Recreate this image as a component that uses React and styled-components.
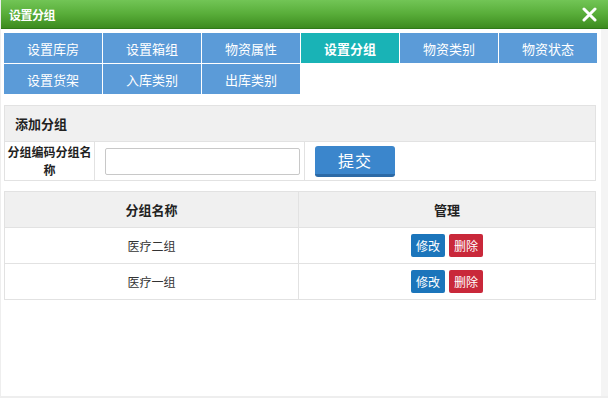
import React from "react";
import styled, { createGlobalStyle } from "styled-components";

const Global = createGlobalStyle`
	html, body {
		margin: 0;
		padding: 0;
		background: #fff;
	}
	body {
		font-family: "Noto Sans CJK SC", "Noto Sans", sans-serif;
		font-size: 12px;
		color: #333;
	}
`;

const Dialog = styled.div`
	width: 608px;
	height: 398px;
	box-sizing: border-box;
	display: flex;
	flex-direction: column;
	background: #fff;
	border-left: 1px solid #eee;
	border-bottom: 2px solid #eee;
	overflow: hidden;
`;

const TitleBar = styled.header`
	height: 28px;
	flex-shrink: 0;
	display: flex;
	align-items: center;
	justify-content: space-between;
	padding: 0 10px 0 8px;
	background: linear-gradient(to bottom, #72c556 0%, #58ad39 50%, #3d8b1f 100%);
	border-bottom: 1px solid #2f7a18;
`;

const Title = styled.h1`
	margin: 0;
	font-size: 12px;
	font-weight: bold;
	color: #fff;
	letter-spacing: -0.5px;
`;

const Close = styled.button`
	width: 18px;
	height: 18px;
	padding: 0;
	border: 0;
	background: none;
	display: flex;
	align-items: center;
	justify-content: center;
`;

const Body = styled.main`
	flex: 1;
	display: flex;
	flex-direction: column;
	padding: 4px 10px 0 3px;
	border-right: 7px solid #f4f4f4;
`;

const Tabs = styled.nav`
	display: grid;
	grid-template-columns: repeat(6, 98px);
	gap: 1px;
	margin-bottom: 11px;
`;

const Tab = styled.a`
	height: 30px;
	display: flex;
	align-items: center;
	justify-content: center;
	font-size: 13px;
	color: #fff;
	font-weight: ${p => (p.$active ? "bold" : "normal")};
	background: ${p => (p.$active ? "#19b3b6" : "#5b9bd8")};
	cursor: pointer;
`;

const Table = styled.table`
	width: 592px;
	border-collapse: collapse;
	margin-bottom: 10px;

	th, td {
		border: 1px solid #e2e2e2;
	}
`;

const HeadCell = styled.th`
	height: 35px;
	padding: 0 ${p => (p.$left ? "10px" : "0")};
	background: #f0f0f0;
	font-size: 13px;
	font-weight: bold;
	color: #222;
	text-align: ${p => (p.$left ? "left" : "center")};
`;

const Label = styled.td`
	width: 90px;
	height: 39px;
	padding: 0 2px;
	font-weight: bold;
	font-size: 12px;
	line-height: 18px;
	text-align: center;
	color: #222;
	box-sizing: border-box;
`;

const Cell = styled.td`
	height: 35px;
	padding: ${p => p.$pad || "0"};
	text-align: ${p => p.$align || "center"};
	font-size: 12px;
	color: #333;
`;

const Input = styled.input`
	width: 195px;
	height: 27px;
	box-sizing: border-box;
	border: 1px solid #c8c8c8;
	border-radius: 2px;
	outline: none;
	vertical-align: middle;
`;

const Submit = styled.button`
	width: 80px;
	height: 31px;
	border: 0;
	border-bottom: 3px solid #2c6aa6;
	border-radius: 3px;
	background: #3b86cc;
	color: #fff;
	font-family: inherit;
	font-size: 16px;
	letter-spacing: 1px;
	vertical-align: middle;
`;

const Action = styled.button`
	height: 23px;
	padding: 0 5px;
	margin: 0 2px;
	border: 0;
	border-radius: 2px;
	background: ${p => (p.$danger ? "#c9283a" : "#1b75bb")};
	color: #fff;
	font-family: inherit;
	font-size: 12px;
	vertical-align: middle;
`;

const tabs = ["设置库房", "设置箱组", "物资属性", "设置分组", "物资类别", "物资状态", "设置货架", "入库类别", "出库类别"];
const groups = ["医疗二组", "医疗一组"];

export default function App() {
	return (
		<>
			<Global />
			<Dialog>
				<TitleBar>
					<Title>设置分组</Title>
					<Close aria-label="关闭">
						<svg width="15" height="15" viewBox="0 0 15 15">
							<path d="M2 2 L13 13 M13 2 L2 13" stroke="#fff" strokeWidth="3" strokeLinecap="round" />
						</svg>
					</Close>
				</TitleBar>
				<Body>
					<Tabs>
						{tabs.map(t => (
							<Tab key={t} $active={t === "设置分组"}>{t}</Tab>
						))}
					</Tabs>
					<Table>
						<tbody>
							<tr>
								<HeadCell $left colSpan={3}>添加分组</HeadCell>
							</tr>
							<tr>
								<Label>分组编码分组名称</Label>
								<Cell $align="left" $pad="0 4px 0 10px" style={{ width: 195 }}>
									<Input type="text" />
								</Cell>
								<Cell $align="left" $pad="0 10px">
									<Submit>提交</Submit>
								</Cell>
							</tr>
						</tbody>
					</Table>
					<Table>
						<thead>
							<tr>
								<HeadCell style={{ width: 293 }}>分组名称</HeadCell>
								<HeadCell>管理</HeadCell>
							</tr>
						</thead>
						<tbody>
							{groups.map(g => (
								<tr key={g}>
									<Cell>{g}</Cell>
									<Cell>
										<Action>修改</Action>
										<Action $danger>删除</Action>
									</Cell>
								</tr>
							))}
						</tbody>
					</Table>
				</Body>
			</Dialog>
		</>
	);
}
